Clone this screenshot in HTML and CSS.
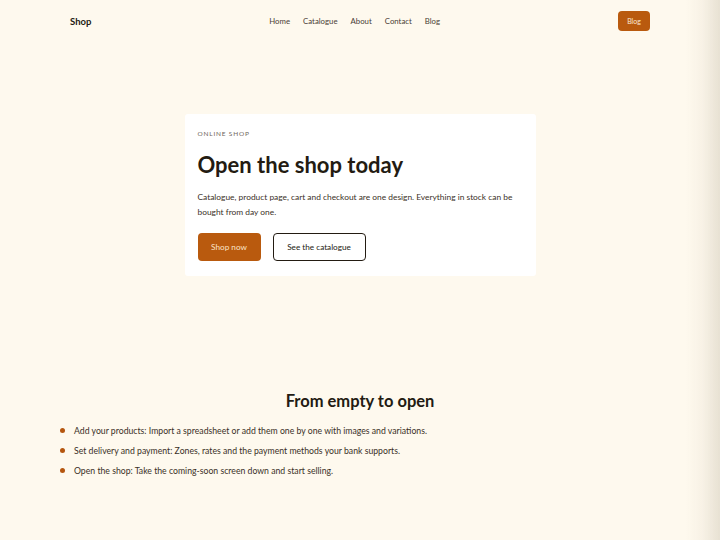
FILE: index.html
```html
<!DOCTYPE html>
<html lang="en">
<head>
<meta charset="utf-8">
<title>Shop</title>
<link rel="stylesheet" href="styles.css">
</head>
<body>
<header class="topbar">
  <a class="logo" href="#">Shop</a>
  <nav class="nav">
    <a href="#">Home</a>
    <a href="#">Catalogue</a>
    <a href="#">About</a>
    <a href="#">Contact</a>
    <a href="#">Blog</a>
  </nav>
  <a class="btn-top" href="#">Blog</a>
</header>
<main>
  <section class="hero">
    <div class="card">
      <p class="eyebrow">ONLINE SHOP</p>
      <h1>Open the shop today</h1>
      <p class="lead">Catalogue, product page, cart and checkout are one design. Everything in stock can be bought from day one.</p>
      <div class="actions">
        <a class="btn btn-primary" href="#">Shop now</a>
        <a class="btn btn-outline" href="#">See the catalogue</a>
      </div>
    </div>
  </section>
  <section class="steps">
    <h2>From empty to open</h2>
    <ul class="list">
      <li><span class="dot"></span>Add your products: Import a spreadsheet or add them one by one with images and variations.</li>
      <li><span class="dot"></span>Set delivery and payment: Zones, rates and the payment methods your bank supports.</li>
      <li><span class="dot"></span>Open the shop: Take the coming-soon screen down and start selling.</li>
    </ul>
  </section>
</main>
<div class="edge"></div>
</body>
</html>
```
FILE: styles.css
```css
* { box-sizing: border-box; }
html, body { margin: 0; padding: 0; }
body {
  background: #fef9ee;
  color: #2a2118;
  font-family: "Lato", "Noto Sans", sans-serif;
  width: 720px;
  height: 540px;
  overflow: hidden;
}
a { text-decoration: none; color: inherit; }

.topbar {
  display: flex;
  align-items: center;
  justify-content: space-between;
  height: 41px;
  padding: 0 70px;
  position: relative;
}
.logo { font-weight: 700; font-size: 9.5px; color: #231b12; padding-top: 2px; }
.nav {
  display: flex;
  gap: 13px;
  font-size: 7.8px;
  color: #4a4036;
}
.btn-top {
  background: #b95a0e;
  color: #fbe9d6;
  font-size: 7px;
  border-radius: 4px;
  width: 32px;
  height: 20px;
  display: flex;
  align-items: center;
  justify-content: center;
}

.hero {
  display: flex;
  justify-content: center;
  padding-top: 73px;
}
.card {
  background: #fff;
  width: 351px;
  padding: 16px 13px 15px 13px;
  border-radius: 3px;
}
.eyebrow {
  margin: 0;
  font-size: 6.5px;
  letter-spacing: 0.8px;
  color: #6f665c;
  line-height: 8px;
}
h1 {
  margin: 13px 0 0;
  font-size: 22px;
  font-weight: 700;
  color: #231b12;
  line-height: 28px;
}
.lead {
  margin: 11px 0 0;
  font-size: 8.4px;
  line-height: 15px;
  color: #3a3027;
}
.actions {
  display: flex;
  gap: 12px;
  margin-top: 13px;
}
.btn {
  height: 28px;
  display: flex;
  align-items: center;
  justify-content: center;
  font-size: 8.2px;
  border-radius: 4px;
}
.btn-primary {
  background: #b95a0e;
  color: #fbe3c8;
  width: 63px;
}
.btn-outline {
  border: 1px solid #231b12;
  color: #231b12;
  width: 93px;
}

.steps {
  padding-top: 115px;
}
h2 {
  margin: 0;
  text-align: center;
  font-size: 16.5px;
  font-weight: 700;
  color: #231b12;
  line-height: 20px;
}
.list {
  list-style: none;
  margin: 14px 0 0;
  padding: 0 0 0 60px;
  display: flex;
  flex-direction: column;
  gap: 9px;
}
.list li {
  display: flex;
  align-items: center;
  gap: 9px;
  font-size: 8.7px;
  line-height: 11px;
  color: #3a3027;
}
.dot {
  width: 5px;
  height: 5px;
  border-radius: 50%;
  background: #b5560f;
  flex: none;
}

.edge {
  position: fixed;
  top: 0;
  right: 0;
  width: 34px;
  height: 540px;
  background: linear-gradient(to right, rgba(200,190,170,0), rgba(200,190,170,0.12) 50%, rgba(190,180,160,0.35));
  pointer-events: none;
}
```
